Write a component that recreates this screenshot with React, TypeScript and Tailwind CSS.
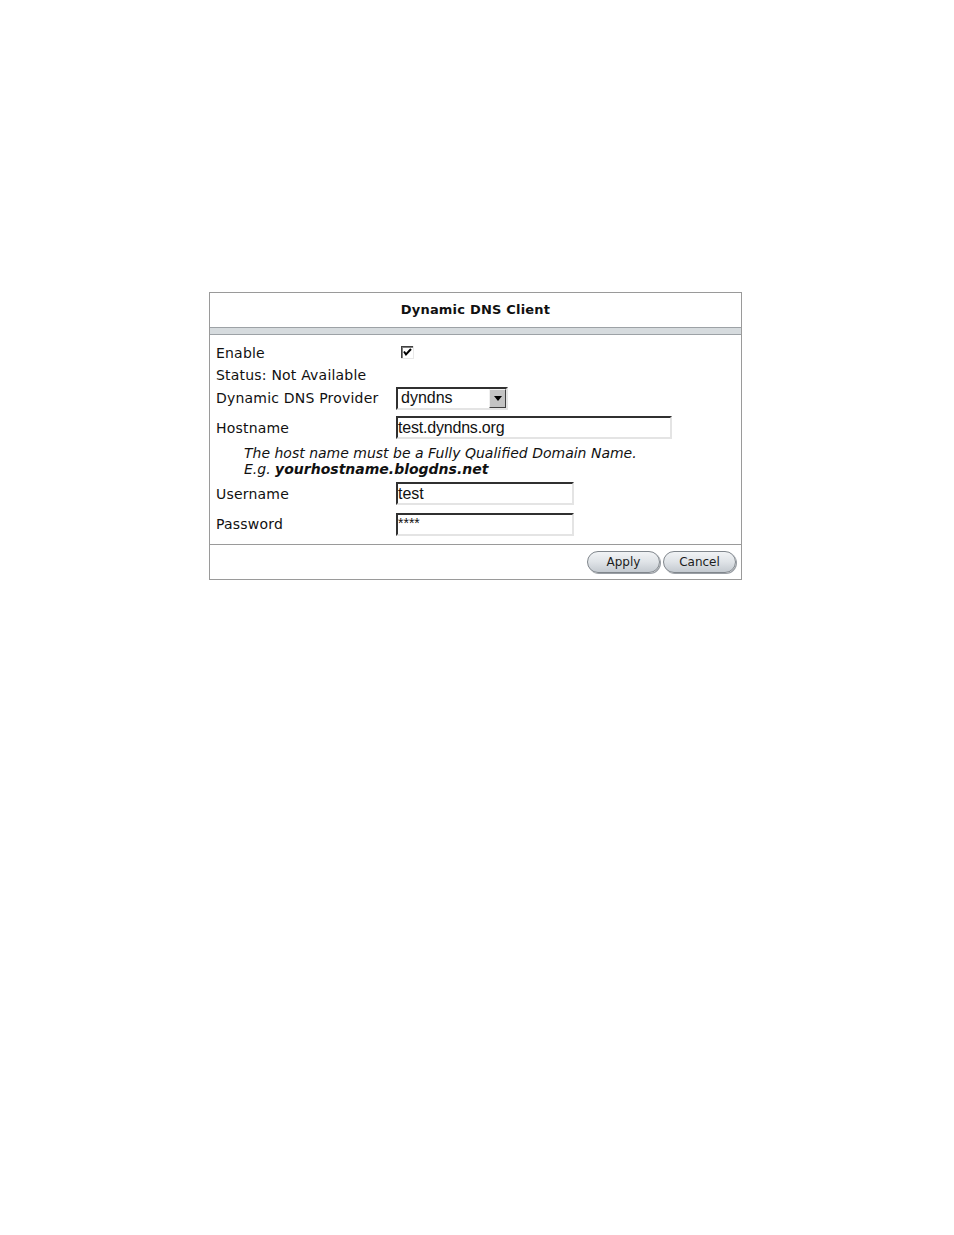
import * as React from "react";

const label = "text-[14px] text-[#111] leading-none tracking-[0.2px]";
const inputText = "text-[16px] text-[#111] font-['Liberation_Sans',Arial,sans-serif] leading-none";

function Field({ width, children }: { width: number; children: React.ReactNode }) {
  return (
    <div
      className="h-[23px] bg-white border-2 border-t-[#303030] border-l-[#303030] border-r-[#e4e4e4] border-b-[#e4e4e4] flex items-center overflow-hidden"
      style={{ width }}
    >
      {children}
    </div>
  );
}

function PillButton({ children }: { children: React.ReactNode }) {
  return (
    <button className="h-[22px] w-[73px] rounded-full border border-[#80868c] bg-gradient-to-b from-[#f1f3f5] via-[#dfe3e7] to-[#c4cad0] shadow-[1px_1px_0_#9a9fa5] text-[12px] text-[#1c1c1c] font-['DejaVu_Sans',sans-serif] leading-none">
      {children}
    </button>
  );
}

export default function App() {
  return (
    <div className="min-h-[1235px] bg-white pt-[292px] pl-[209px] font-['DejaVu_Sans',Verdana,sans-serif]">
      <div className="w-[533px] border border-[#9a9a9a] bg-white">
        {/* Title */}
        <div className="h-[34px] flex items-center justify-center">
          <span className="text-[13px] font-bold text-[#111] tracking-[0.2px]">Dynamic DNS Client</span>
        </div>
        <div className="h-[8px] bg-[#d6dbde] border-y border-[#9da2a6]" />

        {/* Body */}
        <div className="pt-[7px] pb-[5px] pl-[6px]">
          <div className="h-[22px] flex items-center">
            <span className={`${label} w-[180px]`}>Enable</span>
            <svg width="13" height="13" viewBox="0 0 13 13" className="ml-[5px] -mt-[2px]">
              <rect x="0" y="0" width="13" height="13" fill="#fff" />
              <path d="M0 0.5H12.5M0.5 0V13" stroke="#404040" />
              <path d="M1 1.5H12M1.5 1V12" stroke="#808080" />
              <path d="M0 12.5H13M12.5 0V13" stroke="#e8e8e8" />
              <path d="M3 5.5L5 8.5L10 3" stroke="#000" strokeWidth="2" fill="none" />
            </svg>
          </div>
          <div className="h-[22px] flex items-center">
            <span className={label}>Status: Not Available</span>
          </div>
          <div className="h-[24px] flex items-center">
            <span className={`${label} w-[180px]`}>Dynamic DNS Provider</span>
            <div className="w-[112px] h-[23px] bg-white border-2 border-t-[#303030] border-l-[#303030] border-r-[#e4e4e4] border-b-[#e4e4e4] flex items-stretch justify-between">
              <span className={`pl-[3px] self-center ${inputText}`}>dyndns</span>
              <div className="w-[17px] bg-[#c3c3c3] border border-t-[#f0f0f0] border-l-[#f0f0f0] border-r-[#404040] border-b-[#404040] flex items-center justify-center">
                <svg width="8" height="5" viewBox="0 0 8 5">
                  <path d="M0 0H8L4 5Z" fill="#000" />
                </svg>
              </div>
            </div>
          </div>
          <div className="h-[35px] flex items-center">
            <span className={`${label} w-[180px]`}>Hostname</span>
            <Field width={276}>
              <span className={`${inputText} tracking-[-0.2px]`}>test.dyndns.org</span>
            </Field>
          </div>
          <div className="h-[32px] pl-[28px] flex flex-col justify-center text-[14px] italic text-[#111] leading-[16px]">
            <span>The host name must be a Fully Qualified Domain Name.</span>
            <span>
              E.g. <b className="font-bold">yourhostname.blogdns.net</b>
            </span>
          </div>
          <div className="h-[32px] flex items-center pt-[1px]">
            <span className={`${label} w-[180px]`}>Username</span>
            <Field width={178}>
              <span className={inputText}>test</span>
            </Field>
          </div>
          <div className="h-[30px] flex items-center">
            <span className={`${label} w-[180px]`}>Password</span>
            <Field width={178}>
              <span className="self-start pt-[1px] text-[14px] text-[#111] font-['Liberation_Sans',Arial,sans-serif] leading-none">
                ****
              </span>
            </Field>
          </div>
        </div>

        {/* Footer */}
        <div className="h-[35px] border-t border-[#9a9a9a] flex items-center justify-end gap-[3px] pr-[5px]">
          <PillButton>Apply</PillButton>
          <PillButton>Cancel</PillButton>
        </div>
      </div>
    </div>
  );
}
